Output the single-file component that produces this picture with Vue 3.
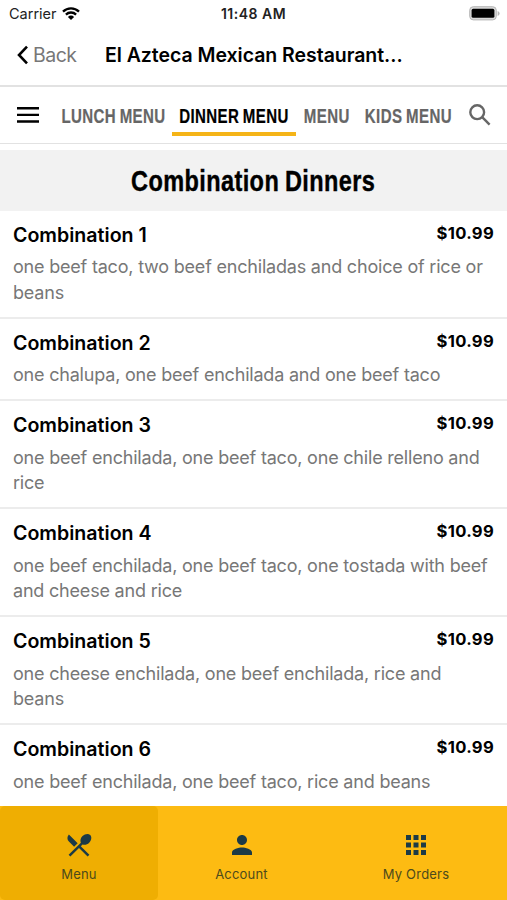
<template>
  <div class="app">
    <div class="status">
      <div class="status__left">
        <span class="status__carrier">Carrier</span>
        <svg class="status__wifi" viewBox="0 0 18 13">
          <path d="M1 4.6a11.4 11.4 0 0 1 16 0M3.9 7.6a7.3 7.3 0 0 1 10.2 0" />
          <path class="status__wifi-dot" d="M9 13 5.9 9.9a4.4 4.4 0 0 1 6.2 0z" />
        </svg>
      </div>
      <span class="status__time">11:48 AM</span>
      <svg class="status__battery" viewBox="0 0 31 15">
        <rect x="0.7" y="0.7" width="26.6" height="13.2" rx="3.6" fill="#d9d9d9" stroke="#b5b5b5" />
        <rect x="2.6" y="2.8" width="22.8" height="9" rx="1.6" fill="#000" />
        <path d="M28.6 5v5q2-.8 2-2.5T28.6 5z" fill="#b5b5b5" />
      </svg>
    </div>

    <header class="header">
      <button class="header__back">
        <svg viewBox="0 0 12 20"><path d="M10 1.6 2 10l8 8.4" /></svg>
        <span>Back</span>
      </button>
      <h1 class="header__title">El Azteca Mexican Restaurant...</h1>
    </header>

    <nav class="tabs">
      <svg class="tabs__burger" viewBox="0 0 22 16">
        <path d="M0 1.3h22M0 7.9h22M0 14.5h22" />
      </svg>
      <button
        v-for="tab in tabs"
        :key="tab.label"
        class="tabs__item"
        :class="{ 'tabs__item--active': tab.label === activeTab }"
        :style="{ width: tab.width + 'px' }"
        @click="activeTab = tab.label"
      >
        <span class="tabs__label">{{ tab.label }}</span>
      </button>
      <svg class="tabs__search" viewBox="0 0 22 22">
        <circle cx="8.2" cy="8.2" r="6.9" />
        <path d="m13.2 13.2 7.4 7.4" />
      </svg>
    </nav>

    <h2 class="section">
      <span class="section__label">Combination Dinners</span>
    </h2>

    <main class="list">
      <article v-for="item in items" :key="item.name" class="item">
        <div class="item__head">
          <h3 class="item__name">{{ item.name }}</h3>
          <span class="item__price">{{ item.price }}</span>
        </div>
        <p class="item__desc">{{ item.desc }}</p>
      </article>
    </main>

    <footer class="bottom">
      <button class="bottom__item bottom__item--active">
        <svg viewBox="0 0 24 24">
          <path
            d="m8.1 13.34 2.83-2.83L3.91 3.5c-1.56 1.56-1.56 4.09 0 5.66l4.19 4.18zm6.78-1.81c1.53.71 3.68.21 5.27-1.38 1.91-1.91 2.28-4.65.81-6.12-1.46-1.46-4.2-1.1-6.12.81-1.59 1.59-2.09 3.74-1.38 5.27L3.7 19.87l1.41 1.41L12 14.41l6.88 6.88 1.41-1.41L13.41 13l1.47-1.47z"
          />
        </svg>
        <span>Menu</span>
      </button>
      <button class="bottom__item">
        <svg viewBox="0 0 24 24">
          <path
            d="M12 12c2.21 0 4-1.79 4-4s-1.79-4-4-4-4 1.79-4 4 1.79 4 4 4zm0 2c-2.67 0-8 1.34-8 4v2h16v-2c0-2.66-5.33-4-8-4z"
          />
        </svg>
        <span>Account</span>
      </button>
      <button class="bottom__item bottom__item--orders">
        <svg viewBox="0 0 24 24">
          <path
            d="M4 8h4V4H4v4zm6 12h4v-4h-4v4zm-6 0h4v-4H4v4zm0-6h4v-4H4v4zm6 0h4v-4h-4v4zm6-10v4h4V4h-4zm-6 4h4V4h-4v4zm6 6h4v-4h-4v4zm0 6h4v-4h-4v4z"
          />
        </svg>
        <span>My Orders</span>
      </button>
    </footer>
  </div>
</template>

<script setup>
import { ref } from 'vue'

const activeTab = ref('DINNER MENU')

// width: bề rộng tab, chữ bên trong được nén ngang
const tabs = [
  { label: 'LUNCH MENU', width: 117 },
  { label: 'DINNER MENU', width: 124 },
  { label: 'MENU', width: 61 },
  { label: 'KIDS MENU', width: 102 },
]

const items = [
  {
    name: 'Combination 1',
    price: '$10.99',
    desc: 'one beef taco, two beef enchiladas and choice of rice or beans',
  },
  {
    name: 'Combination 2',
    price: '$10.99',
    desc: 'one chalupa, one beef enchilada and one beef taco',
  },
  {
    name: 'Combination 3',
    price: '$10.99',
    desc: 'one beef enchilada, one beef taco, one chile relleno and rice',
  },
  {
    name: 'Combination 4',
    price: '$10.99',
    desc: 'one beef enchilada, one beef taco, one tostada with beef and cheese and rice',
  },
  {
    name: 'Combination 5',
    price: '$10.99',
    desc: 'one cheese enchilada, one beef enchilada, rice and beans',
  },
  {
    name: 'Combination 6',
    price: '$10.99',
    desc: 'one beef enchilada, one beef taco, rice and beans',
  },
]
</script>

<style>
body {
  background: #fff;
}
</style>

<style scoped>
.app {
  display: flex;
  flex-direction: column;
  width: 507px;
  height: 900px;
  overflow: hidden;
  font-family: Inter, 'Liberation Sans', sans-serif;
  color: #000;
  background: #fff;
}

button {
  padding: 0;
  border: none;
  background: none;
  font-family: inherit;
}

h1,
h2,
h3,
p {
  margin: 0;
}

.status {
  display: grid;
  grid-template-columns: 1fr auto 1fr;
  align-items: center;
  height: 27px;
  padding: 0 7px 0 9px;
  box-sizing: border-box;
  flex-shrink: 0;
}
.status__left {
  display: flex;
  align-items: center;
  gap: 5px;
}
.status__carrier {
  font-size: 14.5px;
  color: #222;
}
.status__wifi {
  width: 18px;
  height: 13px;
  fill: none;
  stroke: #000;
  stroke-width: 2.3;
}
.status__wifi-dot {
  fill: #000;
  stroke: none;
}
.status__time {
  font-size: 14px;
  font-weight: 600;
  letter-spacing: 0.5px;
  margin-right: 2px;
  color: #222;
}
.status__battery {
  justify-self: end;
  width: 31px;
  height: 15px;
}

.header {
  display: flex;
  align-items: center;
  height: 60px;
  padding: 0 17px 2px;
  box-sizing: border-box;
  border-bottom: 2px solid #e2e2e2;
  flex-shrink: 0;
}
.header__back {
  display: flex;
  align-items: center;
  gap: 4px;
  width: 88px;
  font-size: 19.5px;
  letter-spacing: -0.5px;
  color: #777;
}
.header__back svg {
  width: 12px;
  height: 20px;
  fill: none;
  stroke: #000;
  stroke-width: 2.6;
}
.header__title {
  font-size: 19.5px;
  font-weight: 600;
  letter-spacing: -0.04px;
  white-space: nowrap;
}

.tabs {
  display: flex;
  align-items: center;
  height: 57px;
  padding: 0 16px 0 17px;
  box-sizing: border-box;
  border-bottom: 1px solid #e2e2e2;
  flex-shrink: 0;
}
.tabs__burger {
  width: 22px;
  height: 16px;
  margin-right: 16px;
  stroke: #000;
  stroke-width: 2.4;
}
.tabs__item {
  display: flex;
  align-items: center;
  justify-content: center;
  height: 42px;
  padding-top: 5px;
  box-sizing: border-box;
  border-bottom: 4px solid transparent;
  flex-shrink: 0;
}
.tabs__label {
  font: bold 19.5px/24px 'Liberation Sans', sans-serif;
  letter-spacing: 0.5px;
  word-spacing: -0.06em;
  white-space: nowrap;
  color: #666;
  transform: scaleX(0.772);
  -webkit-text-stroke: 0.2px currentColor;
}
.tabs__item--active {
  border-bottom-color: #f5b417;
}
.tabs__item--active .tabs__label {
  color: #000;
}
.tabs__search {
  width: 22px;
  height: 22px;
  margin-left: auto;
  fill: none;
  stroke: #666;
  stroke-width: 2.4;
}

.section {
  display: flex;
  align-items: center;
  justify-content: center;
  height: 61px;
  margin-top: 6px;
  background: #f2f2f2;
  flex-shrink: 0;
}
.section__label {
  font: bold 29.5px/34px 'Liberation Sans', sans-serif;
  letter-spacing: 0.5px;
  word-spacing: -0.05em;
  white-space: nowrap;
  transform: scaleX(0.797);
  -webkit-text-stroke: 0.4px currentColor;
}

.list {
  flex: 1;
  min-height: 0;
  overflow: hidden;
}
.item {
  padding: 11px 13px 11.4px;
  border-bottom: 2px solid #ececec;
}
.item__head {
  display: flex;
  justify-content: space-between;
  height: 32.4px;
}
.item__name {
  font-size: 19.6px;
  font-weight: 600;
  line-height: 26px;
}
.item__price {
  font-size: 16.6px;
  font-weight: 700;
  line-height: 23.5px;
  letter-spacing: 0.3px;
}
.item__desc {
  font-size: 18px;
  line-height: 25.6px;
  letter-spacing: -0.2px;
  color: #777;
}

.bottom {
  display: flex;
  height: 94px;
  background: #fdbb12;
  flex-shrink: 0;
}
.bottom__item {
  display: flex;
  flex-direction: column;
  align-items: center;
  gap: 6px;
  width: 167px;
  padding-top: 23.5px;
  font-size: 13px;
  letter-spacing: 0.2px;
  color: #4c4a1c;
}
.bottom__item svg {
  width: 30px;
  height: 30px;
  fill: #1c3a46;
}
.bottom__item--active {
  width: 158px;
  border-radius: 5px;
  background: #efae02;
}
.bottom__item--orders {
  width: 182px;
}
</style>
